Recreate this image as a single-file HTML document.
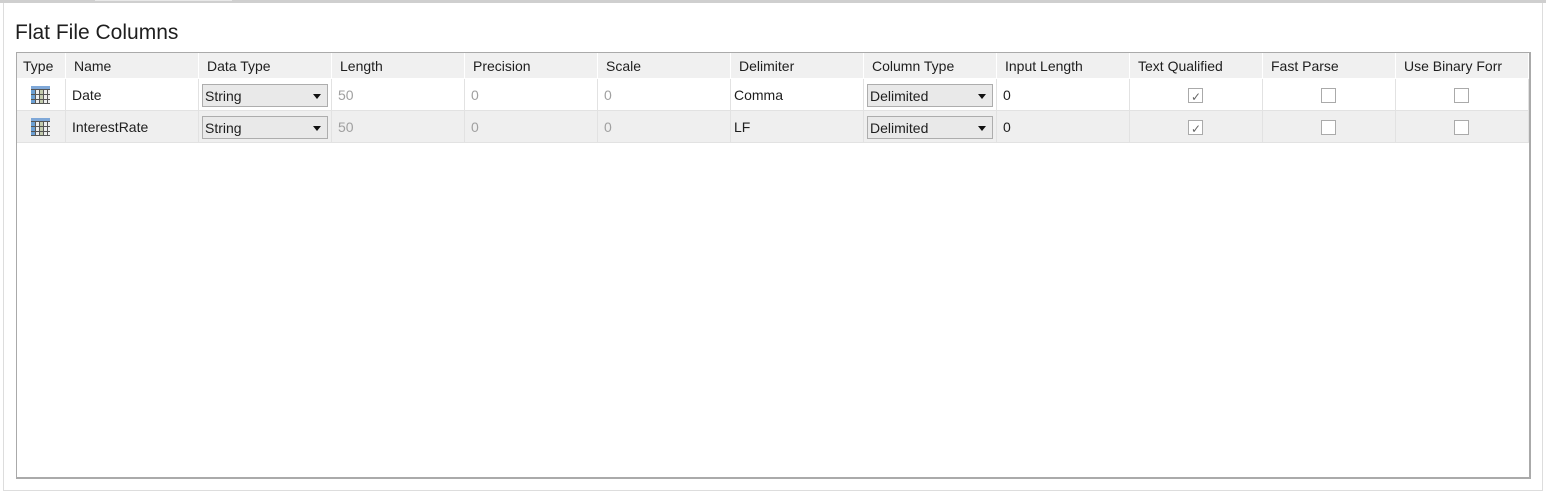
<!DOCTYPE html><html><head><style>
body{margin:0;width:1546px;height:493px;background:#fff;position:relative;overflow:hidden;font-family:"Segoe UI","Liberation Sans",sans-serif;font-size:14px;color:#1e1e1e}
.a{position:absolute}
.h{position:absolute;top:53px;height:25px;background:#f0f0f0;border-right:1px solid #fff;line-height:26px;padding-left:8px;box-sizing:border-box}
.c{position:absolute;height:32px;line-height:33px;padding-left:6px;box-sizing:border-box;border-right:1px solid #e2e2e2;border-bottom:1px solid #e2e2e2}
.g{color:#a0a0a0}
.dd{position:absolute;top:5px;left:3px;width:126px;height:23px;border:1px solid #adadad;background:#e9e9e9;box-sizing:border-box;line-height:23px;padding-left:2px}
.dd:after{content:"";position:absolute;right:6px;top:9px;border-left:4px solid transparent;border-right:4px solid transparent;border-top:5px solid #111}
.cb{position:absolute;top:9px;width:15px;height:15px;border:1px solid #aaa;background:#fff;box-sizing:border-box}
.ck:after{content:"✓";position:absolute;left:2px;top:-8px;font-size:12px;color:#666}
</style></head><body>
<div class="a" style="left:0;top:0;width:1546px;height:3px;background:#cfcfcf"></div>
<div class="a" style="left:95px;top:0;width:137px;height:1px;background:#e8e8e8"></div>
<div class="a" style="left:3px;top:3px;width:1540px;height:488px;border-left:1px solid #ddd;border-right:1px solid #ddd;border-bottom:1px solid #ddd;box-sizing:border-box"></div>
<div class="a" style="left:15px;top:21px;font-size:21px;color:#1e1e1e">Flat File Columns</div>
<div class="a" style="left:16px;top:52px;width:1515px;height:427px;border:1px solid #aaa;border-right:2px solid #aaa;border-bottom:2px solid #aaa;box-sizing:border-box"></div>
<div class="h" style="left:17px;width:49px;padding-left:6px">Type</div>
<div class="h" style="left:66px;width:133px">Name</div>
<div class="h" style="left:199px;width:133px">Data Type</div>
<div class="h" style="left:332px;width:133px">Length</div>
<div class="h" style="left:465px;width:133px">Precision</div>
<div class="h" style="left:598px;width:133px">Scale</div>
<div class="h" style="left:731px;width:133px">Delimiter</div>
<div class="h" style="left:864px;width:133px">Column Type</div>
<div class="h" style="left:997px;width:133px">Input Length</div>
<div class="h" style="left:1130px;width:133px">Text Qualified</div>
<div class="h" style="left:1263px;width:133px">Fast Parse</div>
<div class="h" style="left:1396px;width:133px;overflow:hidden;white-space:nowrap">Use Binary Forr</div>

<div class="a" style="left:17px;top:79px;width:1512px;height:32px;background:#fff"></div>
<div class="a" style="left:17px;top:111px;width:1512px;height:32px;background:#efefef"></div>

<div class="c" style="left:17px;top:79px;width:49px"><svg class="a" style="left:14px;top:7px" width="19" height="18"><rect x="0" y="0" width="19" height="18" fill="#eee"/><rect x="0" y="0" width="4" height="18" fill="#6b9fd4"/><rect x="8" y="0" width="4" height="18" fill="#c3cbae"/><rect x="0" y="0" width="19" height="3" fill="#7fa8d8"/><g stroke="#555" stroke-width="1"><path d="M0 3.5H19M0 8.5H19M0 13.5H19M0 17.5H19M4.5 3V18M8.5 3V18M12.5 3V18M16.5 3V18"/></g></svg></div>
<div class="c" style="left:66px;top:79px;width:133px">Date</div>
<div class="c" style="left:199px;top:79px;width:133px"><div class="dd">String</div></div>
<div class="c g" style="left:332px;top:79px;width:133px">50</div>
<div class="c g" style="left:465px;top:79px;width:133px">0</div>
<div class="c g" style="left:598px;top:79px;width:133px">0</div>
<div class="c" style="left:731px;top:79px;width:133px;padding-left:3px">Comma</div>
<div class="c" style="left:864px;top:79px;width:133px"><div class="dd">Delimited</div></div>
<div class="c" style="left:997px;top:79px;width:133px">0</div>
<div class="c" style="left:1130px;top:79px;width:133px"><div class="cb ck" style="left:58px"></div></div>
<div class="c" style="left:1263px;top:79px;width:133px"><div class="cb" style="left:58px"></div></div>
<div class="c" style="left:1396px;top:79px;width:133px"><div class="cb" style="left:58px"></div></div>

<div class="c" style="left:17px;top:111px;width:49px"><svg class="a" style="left:14px;top:7px" width="19" height="18"><rect x="0" y="0" width="19" height="18" fill="#eee"/><rect x="0" y="0" width="4" height="18" fill="#6b9fd4"/><rect x="8" y="0" width="4" height="18" fill="#c3cbae"/><rect x="0" y="0" width="19" height="3" fill="#7fa8d8"/><g stroke="#555" stroke-width="1"><path d="M0 3.5H19M0 8.5H19M0 13.5H19M0 17.5H19M4.5 3V18M8.5 3V18M12.5 3V18M16.5 3V18"/></g></svg></div>
<div class="c" style="left:66px;top:111px;width:133px">InterestRate</div>
<div class="c" style="left:199px;top:111px;width:133px"><div class="dd">String</div></div>
<div class="c g" style="left:332px;top:111px;width:133px">50</div>
<div class="c g" style="left:465px;top:111px;width:133px">0</div>
<div class="c g" style="left:598px;top:111px;width:133px">0</div>
<div class="c" style="left:731px;top:111px;width:133px;padding-left:3px">LF</div>
<div class="c" style="left:864px;top:111px;width:133px"><div class="dd">Delimited</div></div>
<div class="c" style="left:997px;top:111px;width:133px">0</div>
<div class="c" style="left:1130px;top:111px;width:133px"><div class="cb ck" style="left:58px"></div></div>
<div class="c" style="left:1263px;top:111px;width:133px"><div class="cb" style="left:58px"></div></div>
<div class="c" style="left:1396px;top:111px;width:133px"><div class="cb" style="left:58px"></div></div>
</body></html>
